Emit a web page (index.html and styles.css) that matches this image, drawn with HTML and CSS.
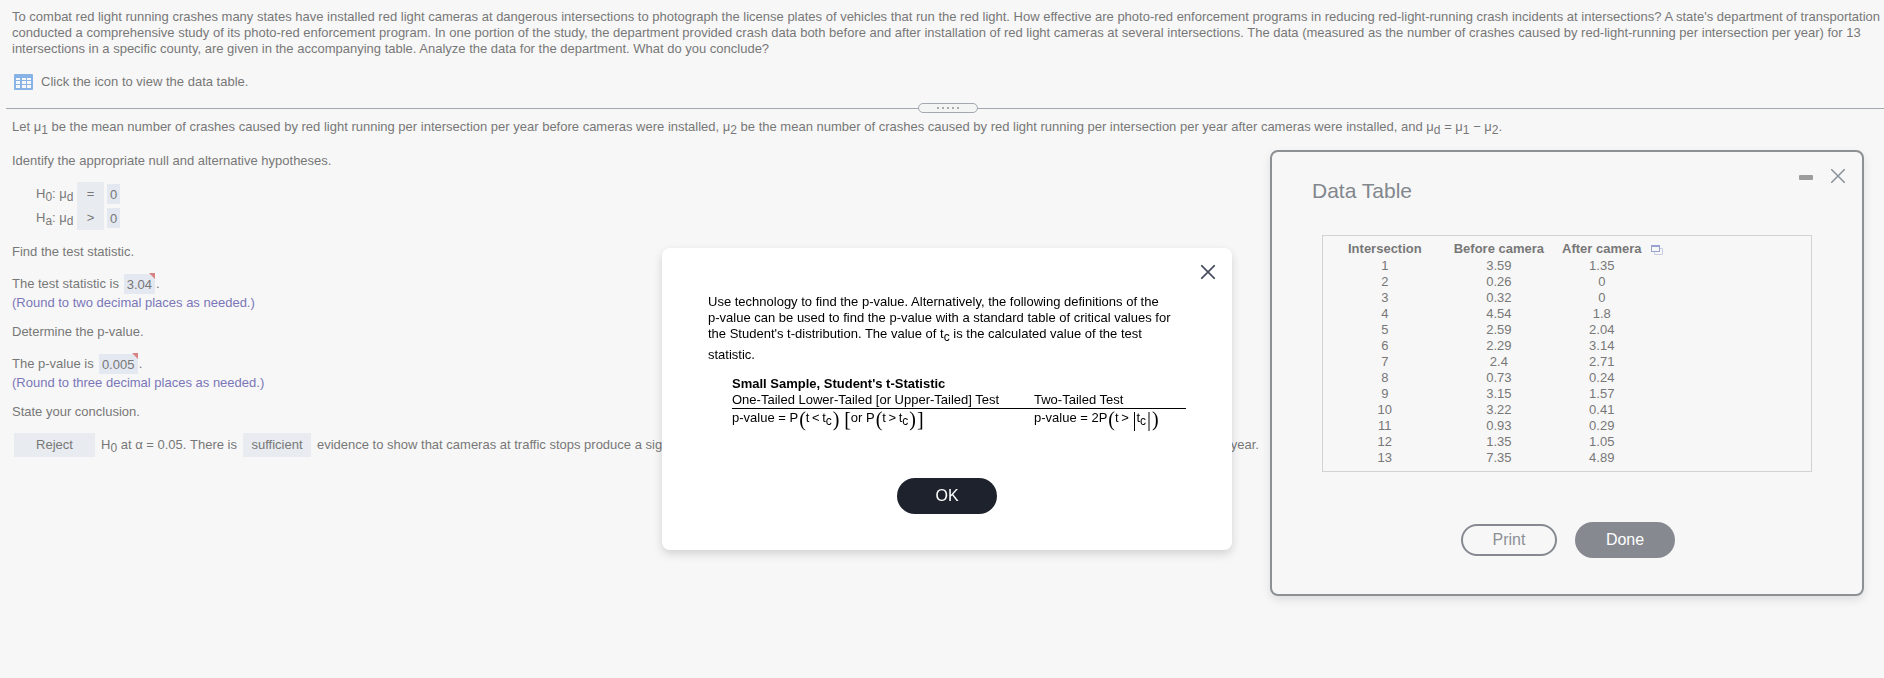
FILE: index.html
```html
<!DOCTYPE html>
<html lang="en">
<head>
  <meta charset="UTF-8">
  <title>Red Light Camera Study</title>
  <link rel="stylesheet" href="styles.css">
</head>
<body>

<main class="question">
  <p class="prompt">To combat red light running crashes many states have installed red light cameras at dangerous intersections to photograph the license plates of vehicles that run the red light. How effective are photo-red enforcement programs in reducing red-light-running crash incidents at intersections? A state's department of transportation<br>
  conducted a comprehensive study of its photo-red enforcement program. In one portion of the study, the department provided crash data both before and after installation of red light cameras at several intersections. The data (measured as the number of crashes caused by red-light-running per intersection per year) for 13<br>
  intersections in a specific county, are given in the accompanying table. Analyze the data for the department. What do you conclude?</p>

  <div class="data-link">
    <button type="button" class="icon-btn" aria-label="Data table">
      <svg width="19" height="16" viewBox="0 0 19 16">
        <rect width="19" height="16" rx="1" fill="#87b3e6"/>
        <path fill="#f7f7f7" d="M2 4h4v2H2zM8 4h4v2H8zM13 4h4v2h-4zM2 7h4v3H2zM8 7h4v3H8zM13 7h4v3h-4zM2 11h4v3H2zM8 11h4v3H8zM13 11h4v3h-4z"/>
      </svg>
    </button>
    <span>Click the icon to view the data table.</span>
  </div>

  <div class="divider">
    <div class="handle"><i></i><i></i><i></i><i></i><i></i></div>
  </div>

  <p class="let">Let μ<sub>1</sub> be the mean number of crashes caused by red light running per intersection per year before cameras were installed, μ<sub>2</sub> be the mean number of crashes caused by red light running per intersection per year after cameras were installed, and μ<sub>d</sub> = μ<sub>1</sub> − μ<sub>2</sub>.</p>

  <p class="step">Identify the appropriate null and alternative hypotheses.</p>

  <div class="hypotheses">
    <div class="hyp">
      <label for="nullSign">H<sub>0</sub>: μ<sub>d</sub></label>
      <select id="nullSign" class="sign"><option>=</option></select>
      <input type="text" class="answer digit" value="0" aria-label="Null value">
    </div>
    <div class="hyp">
      <label for="altSign">H<sub>a</sub>: μ<sub>d</sub></label>
      <select id="altSign" class="sign"><option>&gt;</option></select>
      <input type="text" class="answer digit" value="0" aria-label="Alternative value">
    </div>
  </div>

  <p class="step">Find the test statistic.</p>
  <div class="line">
    <label for="stat">The test statistic is</label>
    <span class="flag"><input type="text" id="stat" class="answer stat" value="3.04"></span>.
  </div>
  <p class="hint">(Round to two decimal places as needed.)</p>

  <p class="step">Determine the p-value.</p>
  <div class="line">
    <label for="pvalue">The p-value is</label>
    <span class="flag"><input type="text" id="pvalue" class="answer pvalue" value="0.005"></span>.
  </div>
  <p class="hint">(Round to three decimal places as needed.)</p>

  <p class="step">State your conclusion.</p>
  <div class="line conclusion">
    <select class="reject" aria-label="Decision"><option>Reject</option></select>
    <span>H<sub>0</sub> at α = 0.05. There is</span>
    <select class="enough" aria-label="Evidence"><option>sufficient</option></select>
    <span>evidence to show that cameras at traffic stops produce a significant</span>
    <select class="change" aria-label="Change"><option>reduction</option></select>
    <span>in the mean number of crashes caused by red light running per intersection per year.</span>
  </div>
</main>

<section class="panel">
  <div class="panel-tools">
    <button type="button" class="icon-btn" aria-label="Minimize">
      <svg width="14" height="14" viewBox="0 0 14 14"><rect y="6" width="14" height="5" rx="1" fill="#9d9d9d"/></svg>
    </button>
    <button type="button" class="icon-btn" aria-label="Close data table">
      <svg width="14" height="14" viewBox="0 0 14 14"><path d="M0 0L14 14M14 0L0 14" stroke="#8a9097" stroke-width="1.5"/></svg>
    </button>
  </div>
  <h2>Data Table</h2>
  <div class="table-box">
    <table>
      <thead>
        <tr><th>Intersection</th><th>Before camera</th><th>After camera</th></tr>
      </thead>
      <tbody>
        <tr><td>1</td><td>3.59</td><td>1.35</td></tr>
        <tr><td>2</td><td>0.26</td><td>0</td></tr>
        <tr><td>3</td><td>0.32</td><td>0</td></tr>
        <tr><td>4</td><td>4.54</td><td>1.8</td></tr>
        <tr><td>5</td><td>2.59</td><td>2.04</td></tr>
        <tr><td>6</td><td>2.29</td><td>3.14</td></tr>
        <tr><td>7</td><td>2.4</td><td>2.71</td></tr>
        <tr><td>8</td><td>0.73</td><td>0.24</td></tr>
        <tr><td>9</td><td>3.15</td><td>1.57</td></tr>
        <tr><td>10</td><td>3.22</td><td>0.41</td></tr>
        <tr><td>11</td><td>0.93</td><td>0.29</td></tr>
        <tr><td>12</td><td>1.35</td><td>1.05</td></tr>
        <tr><td>13</td><td>7.35</td><td>4.89</td></tr>
      </tbody>
    </table>
    <button type="button" class="icon-btn copy" aria-label="Copy data">
      <svg width="12" height="10" viewBox="0 0 12 10" fill="none">
        <path d="M3.5 7v2.5h8v-6H9" stroke="#c9cde4"/>
        <rect x="0.5" y="0.5" width="8" height="6" stroke="#9aa2d0"/>
        <path d="M0 1h9" stroke="#9aa2d0" stroke-width="2"/>
      </svg>
    </button>
  </div>
  <div class="panel-buttons">
    <button type="button" class="btn print">Print</button>
    <button type="button" class="btn done">Done</button>
  </div>
</section>

<div class="overlay">
  <div class="modal" role="dialog" aria-modal="true">
    <button type="button" class="icon-btn modal-close" aria-label="Close">
      <svg width="14" height="14" viewBox="0 0 14 14"><path d="M0 0L14 14M14 0L0 14" stroke="#46505c" stroke-width="1.7"/></svg>
    </button>
    <p class="modal-text">Use technology to find the p-value. Alternatively, the following definitions of the<br>
    p-value can be used to find the p-value with a standard table of critical values for<br>
    the Student's t-distribution. The value of t<sub>c</sub> is the calculated value of the test<br>
    <span class="last">statistic.</span></p>
    <table class="formulas">
      <caption>Small Sample, Student's t-Statistic</caption>
      <thead>
        <tr><th>One-Tailed Lower-Tailed [or Upper-Tailed] Test</th><th>Two-Tailed Test</th></tr>
      </thead>
      <tbody>
        <tr>
          <td>p-value = P<b>(</b>t&thinsp;&lt;&thinsp;t<sub>c</sub><b>)</b> <b>[</b>or P<b>(</b>t&thinsp;&gt;&thinsp;t<sub>c</sub><b>)</b><b>]</b></td>
          <td>p-value = 2P<b>(</b>t&thinsp;&gt;&thinsp;<b>|</b>t<sub>c</sub><b>|</b><b>)</b></td>
        </tr>
      </tbody>
    </table>
    <button type="button" class="btn ok">OK</button>
  </div>
</div>

</body>
</html>
```

FILE: styles.css
```css
* {
  box-sizing: border-box;
}
body {
  margin: 0;
  min-height: 100vh;
  background: #f7f7f7;
  color: #777;
  font-family: "Liberation Sans", Arial, sans-serif;
  font-size: 13px;
  line-height: 16px;
  overflow: hidden;
}
p {
  margin: 0;
}
sub {
  font-size: 12px;
  line-height: 0;
  vertical-align: -3px;
}
button, input, select {
  font: inherit;
  color: inherit;
  border: none;
  margin: 0;
  padding: 0;
}
.icon-btn {
  display: flex;
  background: none;
  cursor: pointer;
}
.question {
  padding: 9px 0 0 12px;
  white-space: nowrap;
}
.data-link {
  display: flex;
  align-items: center;
  gap: 8px;
  margin: 17px 0 0 2px;
}
.divider {
  display: flex;
  justify-content: center;
  align-items: center;
  height: 10px;
  margin: 13px 0 0 -6px;
  padding-left: 6px;
  background: linear-gradient(#a3a8b0, #a3a8b0) 0 5px / 100% 1px no-repeat;
}
.handle {
  display: flex;
  justify-content: center;
  align-items: center;
  gap: 3px;
  width: 60px;
  height: 10px;
  border: 1px solid #a3a8b0;
  border-radius: 5px;
  background: #f3f5f5;
}
.handle i {
  width: 2px;
  height: 2px;
  background: #aaa;
}
.let {
  margin-top: 6px;
}
.let + .step {
  margin-top: 18px;
}
.hypotheses {
  margin: 13px 0 0 24px;
}
.hyp {
  display: flex;
  align-items: center;
  height: 24px;
}
.hyp label {
  width: 41px;
}
select {
  appearance: none;
  height: 24px;
  background: #e8ecf1;
  text-align: center;
  text-align-last: center;
}
.sign {
  width: 27px;
  margin-right: 3px;
}
.answer {
  height: 20px;
  background: #e3e8f1;
  text-align: center;
}
.digit {
  width: 13px;
}
.hypotheses + .step {
  margin-top: 14px;
}
.line {
  display: flex;
  align-items: center;
  height: 20px;
  margin-top: 14px;
}
.flag {
  position: relative;
  display: flex;
  margin: 0 1px 0 5px;
}
.flag::after {
  content: "";
  position: absolute;
  top: -1px;
  right: 0;
  border-top: 6px solid #d98282;
  border-left: 6px solid transparent;
}
.stat {
  width: 31px;
}
.pvalue {
  width: 39px;
}
.hint {
  margin-top: 1px;
  color: #7a76b8;
}
.hint + .step {
  margin-top: 13px;
}
.conclusion {
  height: 24px;
  margin: 13px 0 0 2px;
  gap: 6px;
}
.reject {
  width: 81px;
}
.enough {
  width: 68px;
}
.change {
  width: 58px;
}
.panel {
  position: absolute;
  top: 150px;
  right: 20px;
  width: 594px;
  padding: 17px 17px 36px 40px;
  border: 2px solid #8e9194;
  border-radius: 8px;
  background: #f7f7f7;
  box-shadow: 0 4px 10px rgba(0, 0, 0, 0.1);
}
.panel-tools {
  display: flex;
  justify-content: flex-end;
  gap: 18px;
}
.panel h2 {
  margin: -4px 0 32px;
  color: #82878d;
  font-size: 21px;
  font-weight: normal;
  line-height: 24px;
}
.table-box {
  display: flex;
  align-items: flex-start;
  margin: 0 33px 0 10px;
  padding: 5px 0 5px 16px;
  border: 1px solid #d2d2d2;
}
.table-box table {
  border-collapse: collapse;
  text-align: center;
}
.table-box th, .table-box td {
  padding: 0 9px;
}
.table-box th {
  padding-bottom: 1px;
}
.table-box th:first-child, .table-box td:first-child {
  padding-right: 23px;
}
.copy {
  margin-top: 4px;
}
.panel-buttons {
  display: flex;
  justify-content: center;
  align-items: center;
  gap: 18px;
  margin: 50px 21px 0 0;
}
.btn {
  width: 100px;
  height: 36px;
  border-radius: 18px;
  font-size: 16px;
  cursor: pointer;
}
.print {
  width: 96px;
  height: 32px;
  border: 2px solid #868990;
  background: none;
  color: #8c9096;
}
.done {
  background: #868990;
  color: #fff;
}
.overlay {
  position: fixed;
  inset: 0 0 0 10px;
  display: flex;
  justify-content: center;
  align-items: flex-start;
  padding-top: 248px;
}
.modal {
  display: flex;
  flex-direction: column;
  width: 570px;
  padding: 17px 17px 36px 46px;
  border-radius: 8px;
  background: #fff;
  color: #000;
  box-shadow: 0 4px 10px rgba(0, 0, 0, 0.15);
  white-space: nowrap;
}
.modal-close {
  align-self: flex-end;
}
.modal-text {
  margin-top: 15px;
}
.last {
  line-height: 26px;
}
.formulas {
  width: 454px;
  margin: 8px 0 0 24px;
  border-collapse: collapse;
  text-align: left;
}
.formulas caption {
  font-weight: bold;
  text-align: left;
}
.formulas th {
  padding: 0;
  border-bottom: 1px solid #000;
  font-weight: normal;
}
.formulas th:first-child {
  width: 302px;
}
.formulas td {
  height: 24px;
  padding: 0 0 4px;
}
.formulas b {
  margin-left: 1px;
  font-family: "Liberation Serif", serif;
  font-size: 20px;
  font-weight: normal;
  line-height: 16px;
  vertical-align: -4px;
}
.ok {
  align-self: center;
  margin: 45px 29px 0 0;
  background: #1d222d;
  color: #fff;
}
```
